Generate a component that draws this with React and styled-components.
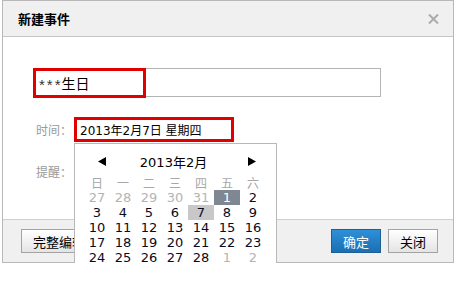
import React from "react";
import styled, { createGlobalStyle, css } from "styled-components";

const Global = createGlobalStyle`
  html, body { margin: 0; padding: 0; background: #fff; }
  body { font-family: "DejaVu Sans", "Noto Sans CJK SC", sans-serif; }
`;

const CJK = `"DejaVu Sans", "Noto Sans CJK SC", sans-serif`;

const Dialog = styled.div`
  position: relative;
  margin-left: 2px;
  width: 452px;
  box-sizing: border-box;
  border: 1px solid #b8b8b8;
  background: #fff;
  font-family: ${CJK};
`;

const Header = styled.div`
  height: 36px;
  box-sizing: border-box;
  background: #f0f0f0;
  border-bottom: 1px solid #c6c6c6;
  display: flex;
  align-items: center;
  justify-content: space-between;
  padding: 0 14px 0 15px;
`;

const Title = styled.div`
  font-family: "Noto Sans CJK SC", sans-serif;
  font-size: 13px;
  font-weight: bold;
  color: #000;
`;

const Close = styled.svg`
  display: block;
`;

const Body = styled.div`
  height: 182px;
  box-sizing: border-box;
  padding: 31px 0 0 30px;
  display: flex;
  flex-direction: column;
`;

const TitleField = styled.div`
  position: relative;
  width: 348px;
  height: 29px;
  box-sizing: border-box;
  border: 1px solid #b4b4b4;
  padding-left: 5px;
  display: flex;
  align-items: center;
  font-size: 14px;
  color: #000;
`;

const Stars = styled.span`
  font-family: "Liberation Sans", sans-serif;
  font-size: 15px;
  letter-spacing: 2px;
  color: #333;
  position: relative;
  top: 2px;
  margin-right: -1px;
`;

const Mark = styled.div`
  position: absolute;
  box-sizing: border-box;
  border: 3px solid #e00000;
  pointer-events: none;
  ${(p) =>
    p.$wide
      ? css`left: -1px; top: -1px; bottom: -1px; right: -1px;`
      : css`left: -1px; top: -1px; width: 113px; height: 30px;`}
`;

const Row = styled.div`
  display: flex;
  align-items: center;
  height: 25px;
  margin-top: ${(p) => p.$gap}px;
`;

const Label = styled.div`
  width: 41px;
  padding-left: 3px;
  box-sizing: border-box;
  font-family: "Noto Sans CJK SC", sans-serif;
  font-size: 12px;
  color: #9a9a9a;
`;

const TimeField = styled.div`
  position: relative;
  width: 160px;
  height: 25px;
  box-sizing: border-box;
  border: 1px solid #aaa;
  padding-left: 5px;
  display: flex;
  align-items: center;
  font-size: 12px;
  color: #000;
`;

const Popup = styled.div`
  position: absolute;
  z-index: 5;
  top: calc(100% + 2px);
  left: -1px;
  width: 203px;
  height: 134px;
  box-sizing: border-box;
  border: 1px solid #b8b8b8;
  background: #fff;
  padding: 7px 10px 0 9px;
`;

const CalHead = styled.div`
  height: 20px;
  display: flex;
  align-items: center;
  justify-content: space-between;
  padding: 0 10px 0 14px;
`;

const Month = styled.div`
  font-size: 13px;
  color: #000;
  margin-right: 7px;
`;

const Grid = styled.div`
  margin-top: 4px;
  display: grid;
  grid-template-columns: repeat(7, 26px);
  grid-auto-rows: 15px;
`;

const Cell = styled.div`
  text-align: center;
  line-height: 15px;
  font-size: 13px;
  color: #0a0a1e;
  ${(p) => p.$kind === "week" && css`font-family: "Noto Sans CJK SC", sans-serif; font-size: 12px; color: #a8a8a8;`}
  ${(p) => p.$kind === "other" && css`color: #b4b4b4;`}
  ${(p) => p.$kind === "selected" && css`background: #7f8792; color: #fff;`}
  ${(p) => p.$kind === "today" && css`background: #c8c8c8;`}
`;

const Footer = styled.div`
  height: 43px;
  box-sizing: border-box;
  border-top: 1px solid #cfcfcf;
  background: #f0f0f0;
  display: flex;
  align-items: center;
  justify-content: space-between;
  padding: 0 15px 0 18px;
`;

const Buttons = styled.div`
  display: flex;
  gap: 7px;
`;

const Button = styled.button`
  height: 24px;
  box-sizing: border-box;
  min-width: 50px;
  padding: 0 11px;
  font-family: "Noto Sans CJK SC", sans-serif;
  font-size: 13px;
  line-height: 1;
  border: 1px solid #a3a3a3;
  background: linear-gradient(#ffffff, #e4e4e4);
  color: #000;
  ${(p) =>
    p.$primary &&
    css`
      border-color: #1b5f96;
      background: linear-gradient(#2e90d8, #1b6fb3);
      color: #fff;
    `}
`;

const Arrow = ({ dir }) => (
  <svg width="8" height="9" viewBox="0 0 8 9">
    {dir === "left" ? <polygon points="8,0 8,9 0,4.5" fill="#000" /> : <polygon points="0,0 0,9 8,4.5" fill="#000" />}
  </svg>
);

const weeks = ["日", "一", "二", "三", "四", "五", "六"];
const days = [
  [27, "other"], [28, "other"], [29, "other"], [30, "other"], [31, "other"], [1, "selected"], [2],
  [3], [4], [5], [6], [7, "today"], [8], [9],
  [10], [11], [12], [13], [14], [15], [16],
  [17], [18], [19], [20], [21], [22], [23],
  [24], [25], [26], [27], [28], [1, "other"], [2, "other"],
];

export default function App() {
  return (
    <>
      <Global />
      <Dialog>
        <Header>
          <Title>新建事件</Title>
          <Close width="11" height="10" viewBox="0 0 11 10">
            <path d="M1 0.5 L10 9.5 M10 0.5 L1 9.5" stroke="#ababab" strokeWidth="2" />
          </Close>
        </Header>
        <Body>
          <TitleField>
            <Stars>***</Stars>生日
            <Mark />
          </TitleField>
          <Row $gap={20}>
            <Label>时间：</Label>
            <TimeField>
              2013年2月7日 星期四
              <Mark $wide />
              <Popup>
                <CalHead>
                  <Arrow dir="left" />
                  <Month>2013年2月</Month>
                  <Arrow dir="right" />
                </CalHead>
                <Grid>
                  {weeks.map((w) => (
                    <Cell key={w} $kind="week">{w}</Cell>
                  ))}
                  {days.map(([d, k], i) => (
                    <Cell key={i} $kind={k}>{d}</Cell>
                  ))}
                </Grid>
              </Popup>
            </TimeField>
          </Row>
          <Row $gap={17}>
            <Label>提醒：</Label>
          </Row>
        </Body>
        <Footer>
          <Button>完整编辑</Button>
          <Buttons>
            <Button $primary>确定</Button>
            <Button>关闭</Button>
          </Buttons>
        </Footer>
      </Dialog>
    </>
  );
}
